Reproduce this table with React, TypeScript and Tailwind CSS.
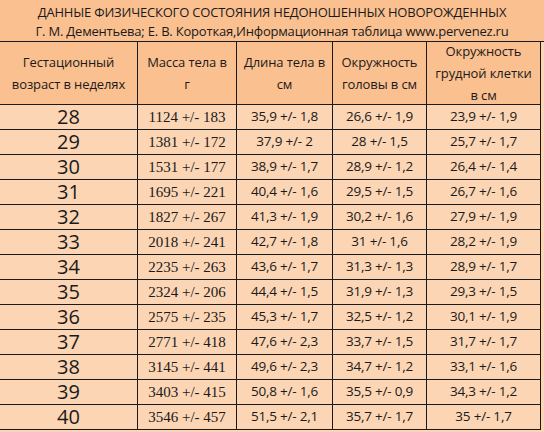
import React from "react";

const rows = [
  ["28", "1124 +/- 183", "35,9 +/- 1,8", "26,6 +/- 1,9", "23,9 +/- 1,9"],
  ["29", "1381 +/- 172", "37,9 +/- 2", "28 +/- 1,5", "25,7 +/- 1,7"],
  ["30", "1531 +/- 177", "38,9 +/- 1,7", "28,9 +/- 1,2", "26,4 +/- 1,4"],
  ["31", "1695 +/- 221", "40,4 +/- 1,6", "29,5 +/- 1,5", "26,7 +/- 1,6"],
  ["32", "1827 +/- 267", "41,3 +/- 1,9", "30,2 +/- 1,6", "27,9 +/- 1,9"],
  ["33", "2018 +/- 241", "42,7 +/- 1,8", "31 +/- 1,6", "28,2 +/- 1,9"],
  ["34", "2235 +/- 263", "43,6 +/- 1,7", "31,3 +/- 1,3", "28,9 +/- 1,7"],
  ["35", "2324 +/- 206", "44,4 +/- 1,5", "31,9 +/- 1,3", "29,3 +/- 1,5"],
  ["36", "2575 +/- 235", "45,3 +/- 1,7", "32,5 +/- 1,2", "30,1 +/- 1,9"],
  ["37", "2771 +/- 418", "47,6 +/- 2,3", "33,7 +/- 1,5", "31,7 +/- 1,7"],
  ["38", "3145 +/- 441", "49,6 +/- 2,3", "34,7 +/- 1,2", "33,1 +/- 1,6"],
  ["39", "3403 +/- 415", "50,8 +/- 1,6", "35,5 +/- 0,9", "34,3 +/- 1,2"],
  ["40", "3546 +/- 457", "51,5 +/- 2,1", "35,7 +/- 1,7", "35 +/- 1,7"],
];

const headers = [
  ["Гестационный", "возраст в неделях"],
  ["Масса тела в", "г"],
  ["Длина тела в", "см"],
  ["Окружность", "головы в см"],
  ["Окружность", "грудной клетки", "в см"],
];

export default function App() {
  return (
    <div className="w-[544px] h-[432px] overflow-hidden bg-[#fcd5b4] text-[#1a1a1a] font-['Open_Sans',sans-serif]">
      {/* title */}
      <div className="h-[42px] bg-[#fac090] border-b border-[#1a1a1a] flex flex-col items-center pt-[3px]">
        <p className="text-[13px] leading-[19px] tracking-[-0.2px]">
          ДАННЫЕ ФИЗИЧЕСКОГО СОСТОЯНИЯ НЕДОНОШЕННЫХ НОВОРОЖДЕННЫХ
        </p>
        <p className="text-[13px] leading-[18px] tracking-[-0.2px]">
          Г. М. Дементьева; Е. В. Короткая,Информационная таблица www.pervenez.ru
        </p>
      </div>

      <div className="w-[541px] grid grid-cols-[138px_99px_96px_94px_114px]">
        {headers.map((lines, i) => (
          <div
            key={i}
            className="h-[63px] bg-[#fac090] border-r border-b border-[#1a1a1a] flex flex-col items-center justify-center text-[13px] leading-[22px] tracking-[-0.1px]"
          >
            {lines.map((l) => (
              <span key={l}>{l}</span>
            ))}
          </div>
        ))}

        {rows.map((r) =>
          r.map((c, j) => (
            <div
              key={r[0] + j}
              className={
                "h-[25px] border-r border-b border-[#1a1a1a] flex items-center justify-center " +
                (j === 0
                  ? "text-[20px] leading-none"
                  : j === 1
                  ? "text-[15px] font-['Liberation_Serif',serif] leading-none"
                  : "text-[13.5px] leading-none tracking-[-0.2px]")
              }
            >
              {c}
            </div>
          ))
        )}
      </div>
    </div>
  );
}
